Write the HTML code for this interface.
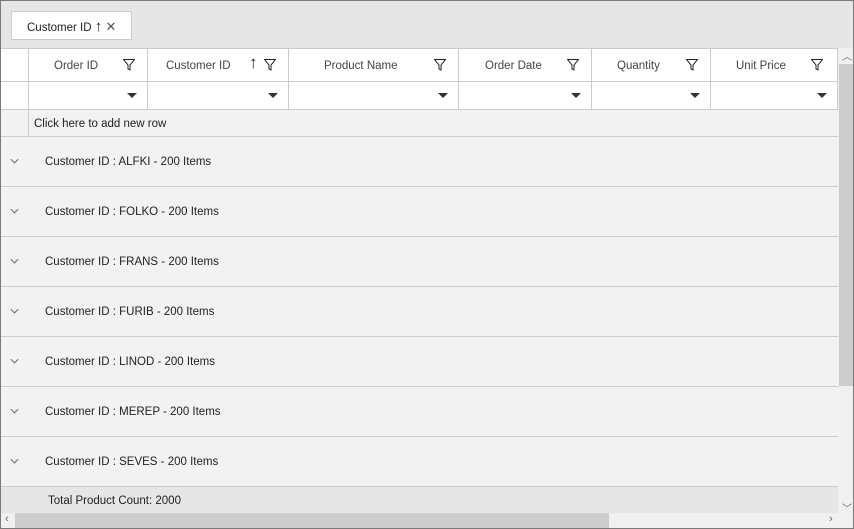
<!DOCTYPE html><html><head><style>
*{box-sizing:border-box;margin:0;padding:0}
body{width:854px;height:529px;overflow:hidden;font-family:"Liberation Sans",sans-serif;font-size:11.5px;color:#333;background:#fff}
.wrap{position:absolute;left:0;top:0;width:854px;height:529px;border:1px solid #7a7a7a;background:#f2f2f2}
.a{position:absolute}
.top{left:0;top:0;width:852px;height:48px;background:#e6e6e6}
.chip{left:10px;top:10px;width:121px;height:29px;background:#fff;border:1px solid #ccc;line-height:29px;padding-left:15px;color:#222}
.hdr{top:47px;height:34px;background:#fff;border-top:1px solid #ccc;border-bottom:1px solid #ccc}
.flt{top:81px;height:28px;background:#fff;border-bottom:1px solid #ccc}
.cell{position:absolute;top:0;bottom:0;border-right:1px solid #ccc}
.ht{position:absolute;top:11px;color:#444}
.grp{left:0;width:837px;height:50px;border-bottom:1px solid #ccc}
.grp span{position:absolute;left:44px;top:19px;color:#222}
.grp i{position:absolute;left:10px;top:19px;width:7px;height:7px;border-right:1px solid #555;border-bottom:1px solid #555;transform:rotate(45deg) scale(.8)}
.tri{position:absolute;right:10px;top:11px;width:0;height:0;border-left:5px solid transparent;border-right:5px solid transparent;border-top:5px solid #333}
</style></head><body><div class="wrap">
<div class="a top"></div>
<div class="a chip">Customer ID <span style="font-size:15px">↑</span> <span style="font-size:13px;color:#555">✕</span></div>
<div class="a hdr" style="left:0;width:837px">
<div class="cell" style="left:0;width:28px"></div>
<div class="cell" style="left:28px;width:119px"><span class="ht" style="left:25px">Order ID</span><svg class="a" style="left:94px;top:10px" width="12" height="12"><path d="M0.5 0.5H11.5L7 6V11L5 10V6Z" fill="none" stroke="#222"/></svg></div>
<div class="cell" style="left:147px;width:141px"><span class="ht" style="left:18px">Customer ID</span><span class="a" style="left:101px;top:4px;font-size:17px;color:#222">↑</span><svg class="a" style="left:116px;top:10px" width="12" height="12"><path d="M0.5 0.5H11.5L7 6V11L5 10V6Z" fill="none" stroke="#222"/></svg></div>
<div class="cell" style="left:288px;width:170px"><span class="ht" style="left:35px">Product Name</span><svg class="a" style="left:145px;top:10px" width="12" height="12"><path d="M0.5 0.5H11.5L7 6V11L5 10V6Z" fill="none" stroke="#222"/></svg></div>
<div class="cell" style="left:458px;width:133px"><span class="ht" style="left:26px">Order Date</span><svg class="a" style="left:108px;top:10px" width="12" height="12"><path d="M0.5 0.5H11.5L7 6V11L5 10V6Z" fill="none" stroke="#222"/></svg></div>
<div class="cell" style="left:591px;width:119px"><span class="ht" style="left:25px">Quantity</span><svg class="a" style="left:94px;top:10px" width="12" height="12"><path d="M0.5 0.5H11.5L7 6V11L5 10V6Z" fill="none" stroke="#222"/></svg></div>
<div class="cell" style="left:710px;width:127px"><span class="ht" style="left:25px">Unit Price</span><svg class="a" style="left:100px;top:10px" width="12" height="12"><path d="M0.5 0.5H11.5L7 6V11L5 10V6Z" fill="none" stroke="#222"/></svg></div>
</div>
<div class="a flt" style="left:0;width:837px">
<div class="cell" style="left:0;width:28px"></div>
<div class="cell" style="left:28px;width:119px"><i class="tri"></i></div>
<div class="cell" style="left:147px;width:141px"><i class="tri"></i></div>
<div class="cell" style="left:288px;width:170px"><i class="tri"></i></div>
<div class="cell" style="left:458px;width:133px"><i class="tri"></i></div>
<div class="cell" style="left:591px;width:119px"><i class="tri"></i></div>
<div class="cell" style="left:710px;width:127px"><i class="tri"></i></div>
</div>
<div class="a" style="left:0;top:109px;width:837px;height:27px;border-bottom:1px solid #ccc"><div class="cell" style="left:0;width:28px"></div><span class="a" style="left:33px;top:8px;color:#222">Click here to add new row</span></div>
<div class="a grp" style="top:136px"><i></i><span>Customer ID : ALFKI - 200 Items</span></div>
<div class="a grp" style="top:186px"><i></i><span>Customer ID : FOLKO - 200 Items</span></div>
<div class="a grp" style="top:236px"><i></i><span>Customer ID : FRANS - 200 Items</span></div>
<div class="a grp" style="top:286px"><i></i><span>Customer ID : FURIB - 200 Items</span></div>
<div class="a grp" style="top:336px"><i></i><span>Customer ID : LINOD - 200 Items</span></div>
<div class="a grp" style="top:386px"><i></i><span>Customer ID : MEREP - 200 Items</span></div>
<div class="a grp" style="top:436px"><i></i><span>Customer ID : SEVES - 200 Items</span></div>
<div class="a" style="left:0;top:485px;width:837px;height:27px;background:#e6e6e6;border-top:1px solid #ccc"><span class="a" style="left:47px;top:8px;color:#222">Total Product Count: 2000</span></div>
<div class="a" style="left:837px;top:47px;width:15px;height:465px;background:#f0f0f0"></div>
<div class="a" style="left:838px;top:63px;width:14px;height:322px;background:#cdcdcd"></div>
<span class="a" style="left:841px;top:47px;font-size:10px;color:#666">︿</span>
<span class="a" style="left:841px;top:499px;font-size:10px;color:#666">﹀</span>
<div class="a" style="left:0;top:512px;width:852px;height:15px;background:#f0f0f0"></div>
<div class="a" style="left:14px;top:512px;width:594px;height:15px;background:#cdcdcd"></div>
<span class="a" style="left:4px;top:512px;font-size:11px;color:#666">‹</span>
<span class="a" style="left:828px;top:512px;font-size:11px;color:#666">›</span>
</div></body></html>
